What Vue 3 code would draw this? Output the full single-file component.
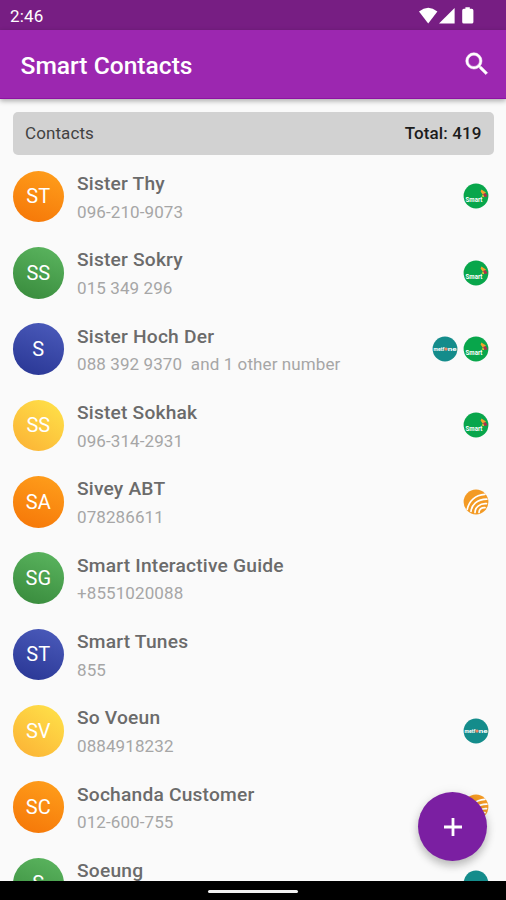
<template>
  <div class="screen">
    <div class="status-bar">
      <span class="clock">2:46</span>
      <svg class="status-icons" viewBox="0 0 56 18" width="56" height="18" fill="#fff">
        <path d="M0 4.4 Q9.2 -3 18.4 4.4 L9.2 16.4 Z" />
        <path d="M35.6 1 V16.4 H20 Z" />
        <path d="M46.4 0.2 h4.4 v1.6 h2 q1.6 0 1.6 1.6 v11.6 q0 1.6 -1.6 1.6 h-8 q-1.6 0 -1.6 -1.6 v-11.6 q0 -1.6 1.6 -1.6 h1.6 z" />
      </svg>
    </div>

    <header class="app-bar">
      <h1 class="app-title">Smart Contacts</h1>
      <button type="button" class="search-btn" aria-label="Search">
        <svg viewBox="0 0 24 24" width="30" height="30" fill="#fff" stroke="#fff" stroke-width="0.4">
          <path
            d="M15.5 14h-.79l-.28-.27A6.471 6.471 0 0 0 16 9.5 6.5 6.5 0 1 0 9.5 16c1.61 0 3.09-.59 4.23-1.57l.27.28v.79l5 4.99L20.49 19l-4.99-5zm-6 0C7.01 14 5 11.99 5 9.5S7.01 5 9.5 5 14 7.01 14 9.5 11.99 14 9.5 14z"
          />
        </svg>
      </button>
    </header>

    <main class="content">
      <div class="summary">
        <span class="summary-label">Contacts</span>
        <span class="summary-total">Total: 419</span>
      </div>

      <ul class="list">
        <li v-for="c in contacts" :key="c.name" class="row">
          <div class="avatar" :class="c.color">{{ c.initials }}</div>
          <div class="info">
            <div class="name">{{ c.name }}</div>
            <div class="phone">{{ c.phone }}</div>
          </div>
          <div class="carriers">
            <svg v-for="k in c.carriers" :key="k" class="carrier" viewBox="0 0 26 26" width="26" height="26">
              <template v-if="k === 'smart'">
                <circle cx="13" cy="13" r="12.4" fill="#08a64b" />
                <path d="M17.6 8.5 L18.4 6.6 L23 9.6 L20 12 Z" fill="#f2a32c" />
                <path d="M19.8 11 L22.6 10.2 L24.6 13.2 L21.5 14 Z" fill="#b52b4c" />
                <path d="M18.5 13.2 L20.3 11.4 L21.2 14.2 Z" fill="#e5cf3a" />
                <text x="2.6" y="18.6" class="logo-text" font-size="6.4" textLength="16.8" lengthAdjust="spacingAndGlyphs">Smart</text>
              </template>
              <template v-else-if="k === 'metfone'">
                <circle cx="13" cy="13" r="12.4" fill="#148c8b" />
                <text x="1.6" y="14.8" class="logo-text" font-size="5.4" textLength="10.8" lengthAdjust="spacingAndGlyphs">metf</text>
                <circle cx="14.1" cy="13.1" r="1.7" fill="#e98763" />
                <text x="15.8" y="14.8" class="logo-text" font-size="5.4" textLength="8.8" lengthAdjust="spacingAndGlyphs">ne</text>
              </template>
              <template v-else>
                <circle cx="13" cy="13" r="12.4" fill="#f39a24" />
                <g fill="none" stroke="#fff" stroke-width="1.7" stroke-linecap="round">
                  <path d="M4.2 20.5 C6 12.5 12 6.2 21.8 5.4" />
                  <path d="M8 22.5 C8.5 16 14 10.3 23.8 10.2" />
                  <path d="M12 23.5 C12 18.5 16.5 14.2 23.5 14.7" />
                  <path d="M16 23.5 C16 20.4 18.6 18.3 22 18.6" />
                </g>
              </template>
            </svg>
          </div>
        </li>
      </ul>
    </main>

    <button type="button" class="fab" aria-label="Add">
      <svg viewBox="0 0 18 18" width="18" height="18" fill="#fff">
        <path d="M7.6 0h2.8v7.6H18v2.8h-7.6V18H7.6v-7.6H0V7.6h7.6z" />
      </svg>
    </button>

    <div class="nav-bar">
      <span class="nav-handle"></span>
    </div>
  </div>
</template>

<script setup>
const contacts = [
  { initials: 'ST', name: 'Sister Thy', phone: '096-210-9073', color: 'orange', carriers: ['smart'] },
  { initials: 'SS', name: 'Sister Sokry', phone: '015 349 296', color: 'green', carriers: ['smart'] },
  {
    initials: 'S',
    name: 'Sister Hoch Der',
    phone: '088 392 9370  and 1 other number',
    color: 'blue',
    carriers: ['metfone', 'smart'],
  },
  { initials: 'SS', name: 'Sistet Sokhak', phone: '096-314-2931', color: 'yellow', carriers: ['smart'] },
  { initials: 'SA', name: 'Sivey ABT', phone: '078286611', color: 'orange', carriers: ['cellcard'] },
  { initials: 'SG', name: 'Smart Interactive Guide', phone: '+8551020088', color: 'green', carriers: [] },
  { initials: 'ST', name: 'Smart Tunes', phone: '855', color: 'blue', carriers: [] },
  { initials: 'SV', name: 'So Voeun', phone: '0884918232', color: 'yellow', carriers: ['metfone'] },
  { initials: 'SC', name: 'Sochanda Customer', phone: '012-600-755', color: 'orange', carriers: ['cellcard'] },
  { initials: 'S', name: 'Soeung', phone: '', color: 'green', carriers: ['metfone'] },
]
</script>

<style>
body {
  margin: 0;
  overflow: hidden;
}
</style>

<style scoped>
.screen {
  position: relative;
  display: flex;
  flex-direction: column;
  height: 900px;
  overflow: hidden;
  background: #fafafa;
  font-family: Roboto, 'Liberation Sans', sans-serif;
}

.status-bar {
  flex: none;
  height: 30px;
  box-sizing: border-box;
  padding: 2px 31.5px 0 10px;
  display: flex;
  align-items: center;
  justify-content: space-between;
  background: #771e83;
  color: #fff;
}

.clock {
  font-size: 17px;
  letter-spacing: 0.2px;
}

.status-icons {
  display: block;
  margin-top: -1px;
}

.app-bar {
  flex: none;
  z-index: 1;
  height: 69px;
  box-sizing: border-box;
  padding: 0 14px 0 20.5px;
  display: flex;
  align-items: center;
  justify-content: space-between;
  background: #9c27b0;
  border-bottom: 1px solid #8e12a3;
  box-shadow: 0 2px 5px rgba(0, 0, 0, 0.32);
}

.app-title {
  margin: 3px 0 0;
  font-size: 24.6px;
  font-weight: 500;
  color: #fff;
}

.search-btn {
  padding: 0;
  border: none;
  background: none;
  display: flex;
}

.content {
  flex: 1;
  min-height: 0;
  overflow: hidden;
  padding: 12.5px 12px 0 12.5px;
}

.summary {
  height: 43.5px;
  box-sizing: border-box;
  padding: 0 12.5px;
  border-radius: 5px;
  display: flex;
  align-items: center;
  justify-content: space-between;
  background: #d2d2d2;
  font-size: 17px;
}

.summary-label {
  color: #424242;
  letter-spacing: 0.1px;
}

.summary-total {
  color: #1c1c1c;
  font-weight: 500;
  letter-spacing: 0.1px;
}

.list {
  margin: 3.3px 0 0;
  padding: 0;
  list-style: none;
}

.row {
  height: 76.33px;
  display: flex;
  align-items: center;
}

.avatar {
  flex: none;
  width: 51.5px;
  height: 51.5px;
  border-radius: 50%;
  display: flex;
  align-items: center;
  justify-content: center;
  color: #fff;
  font-size: 20px;
}

.orange {
  background: linear-gradient(200deg, #ffa01c, #f57507);
}

.green {
  background: linear-gradient(200deg, #5cb660, #37893b);
}

.blue {
  background: linear-gradient(200deg, #4c5cbc, #283593);
}

.yellow {
  background: linear-gradient(215deg, #ffe44a, #fbb034);
}

.info {
  flex: 1;
  min-width: 0;
  margin-left: 13px;
  padding-top: 2.4px;
  white-space: pre;
}

.name {
  height: 27.5px;
  line-height: 28px;
  font-size: 19.2px;
  font-weight: 500;
  letter-spacing: 0.2px;
  color: #6b6b6b;
}

.phone {
  height: 27.5px;
  line-height: 28px;
  font-size: 17px;
  letter-spacing: 0.1px;
  color: #a6a6a6;
}

.carriers {
  display: flex;
  gap: 5px;
  margin-right: 5px;
}

.carrier {
  display: block;
}

.logo-text {
  font-family: Roboto, 'Liberation Sans', sans-serif;
  font-weight: 700;
  fill: #fff;
}

.fab {
  position: absolute;
  left: 418px;
  top: 792px;
  width: 69px;
  height: 69px;
  padding: 0;
  border: none;
  border-radius: 50%;
  display: flex;
  align-items: center;
  justify-content: center;
  background: #7b1fa2;
  box-shadow: 0 5px 8px rgba(0, 0, 0, 0.22), 0 1px 12px rgba(0, 0, 0, 0.08);
}

.nav-bar {
  flex: none;
  position: relative;
  height: 19px;
  display: flex;
  justify-content: center;
  align-items: center;
  background: #000;
}

.nav-handle {
  width: 90px;
  height: 3px;
  margin-top: 2px;
  border-radius: 2px;
  background: #f2f2f2;
}
</style>
